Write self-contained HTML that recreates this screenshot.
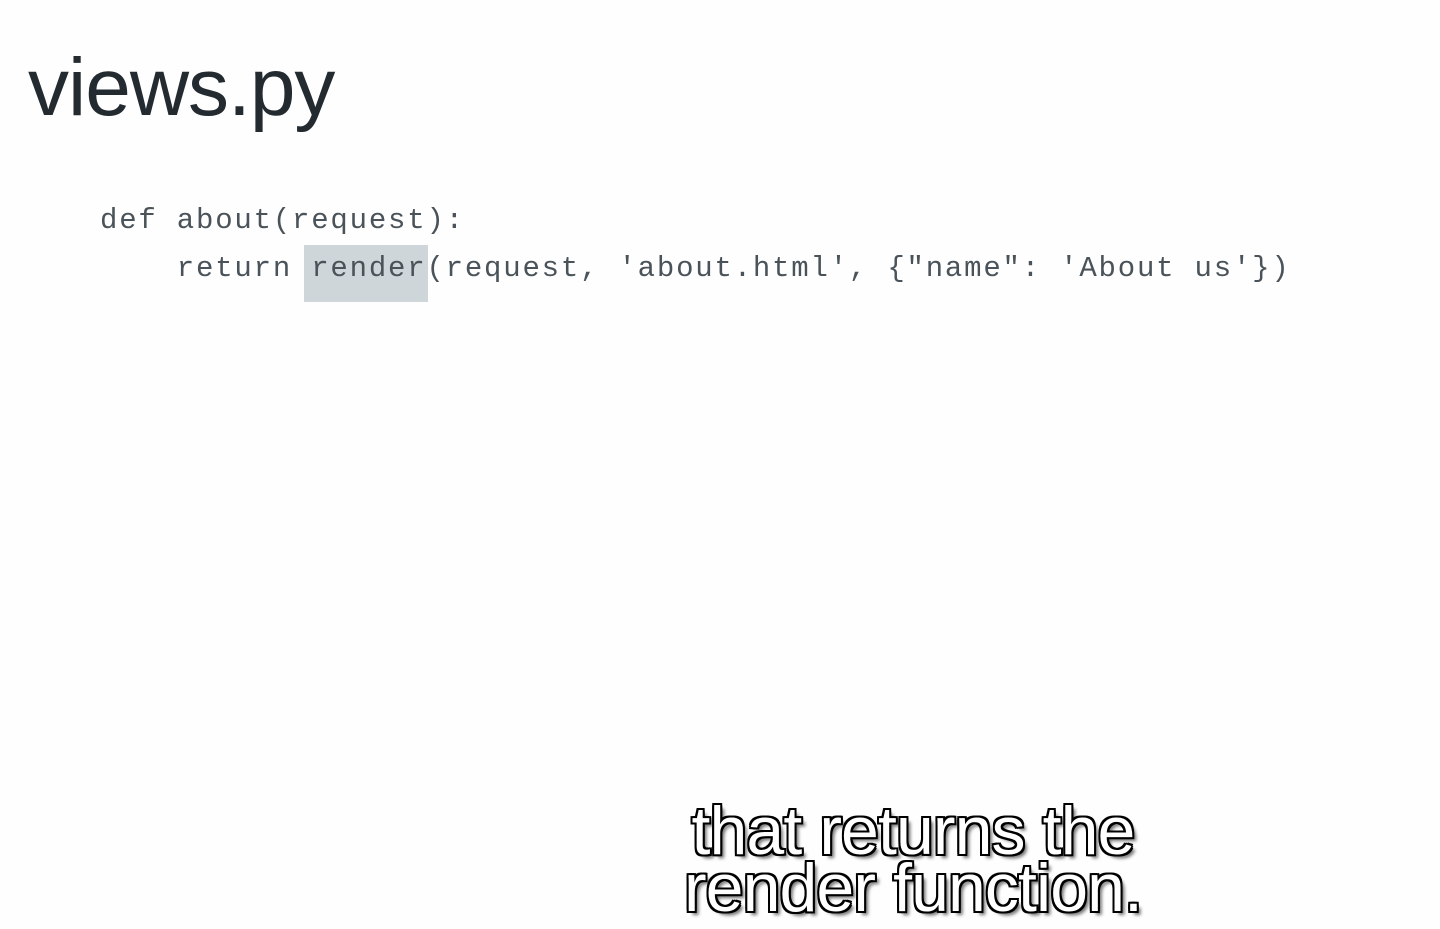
<!DOCTYPE html>
<html><head><meta charset="utf-8"><style>
html,body{margin:0;padding:0;background:#fefefe;width:1440px;height:929px;overflow:hidden;position:relative}
.t{position:absolute;left:28px;top:38px;font:82px/100px "Liberation Sans",sans-serif;letter-spacing:-1px;color:#232b31;}
.c{position:absolute;font:29px/40px "Liberation Mono",monospace;letter-spacing:1.8px;color:#4a5359;white-space:pre}
.hl{position:absolute;left:304px;top:245px;width:124px;height:57px;background:#cfd6da}
.s{position:absolute;left:0;width:1826px;text-align:center;font:68px/57px "Liberation Sans",sans-serif;letter-spacing:-0.9px;color:#fff;
text-shadow:-2px -2px 0 #000,2px -2px 0 #000,-2px 2px 0 #000,2px 2px 0 #000,0 -2px 0 #000,0 2px 0 #000,-2px 0 0 #000,2px 0 0 #000,4px 4px 3px #777}
</style></head><body>
<div class="t">views.py</div>
<div class="hl"></div>
<div class="c" style="left:100px;top:201px">def about(request):</div>
<div class="c" style="left:100px;top:249px">    return render(request, 'about.html', {"name": 'About us'})</div>
<div class="s" style="top:803px">that returns the<br>render function.</div>
</body></html>
